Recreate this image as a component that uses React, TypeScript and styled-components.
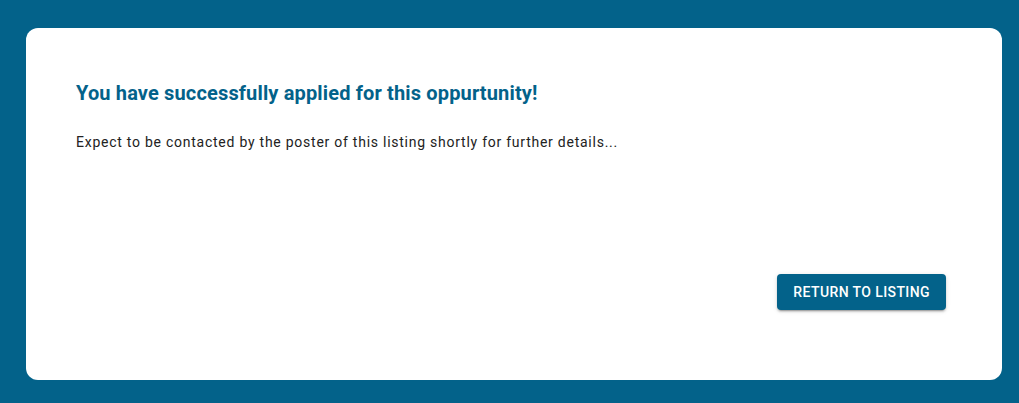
import React from "react";
import styled, { createGlobalStyle } from "styled-components";

const brand = "#03628a";

const Global = createGlobalStyle`
  html, body { margin: 0; padding: 0; background: ${brand}; }
  body { font-family: Roboto, "Liberation Sans", sans-serif; }
`;

const Page = styled.div`
  box-sizing: border-box;
  width: 1019px;
  height: 403px;
  padding: 28px 17px 23px 26px;
  background: ${brand};
`;

const Card = styled.div`
  box-sizing: border-box;
  height: 352px;
  background: #ffffff;
  border-radius: 12px;
  padding: 53px 56px 70px 50px;
  display: flex;
  flex-direction: column;
`;

const Title = styled.h2`
  margin: 0;
  font-size: 20px;
  font-weight: 700;
  line-height: 24px;
  color: ${brand};
  letter-spacing: 0.15px;
`;

const Body = styled.p`
  margin: 27px 0 0;
  font-size: 14px;
  line-height: 20px;
  color: #222;
  letter-spacing: 0.75px;
`;

const Actions = styled.div`
  margin-top: auto;
  display: flex;
  justify-content: flex-end;
`;

const Button = styled.button`
  height: 36px;
  padding: 0 16px;
  border: none;
  border-radius: 4px;
  background: ${brand};
  color: #fff;
  font-family: Roboto, "Liberation Sans", sans-serif;
  font-size: 14px;
  font-weight: 500;
  letter-spacing: 0.4px;
  text-transform: uppercase;
  box-shadow: 0 3px 1px -2px rgba(0,0,0,0.2), 0 2px 2px 0 rgba(0,0,0,0.14), 0 1px 5px 0 rgba(0,0,0,0.12);
  cursor: pointer;
`;

export default function App() {
  return (
    <>
      <Global />
      <Page>
        <Card>
          <Title>You have successfully applied for this oppurtunity!</Title>
          <Body>Expect to be contacted by the poster of this listing shortly for further details...</Body>
          <Actions>
            <Button>Return to listing</Button>
          </Actions>
        </Card>
      </Page>
    </>
  );
}
